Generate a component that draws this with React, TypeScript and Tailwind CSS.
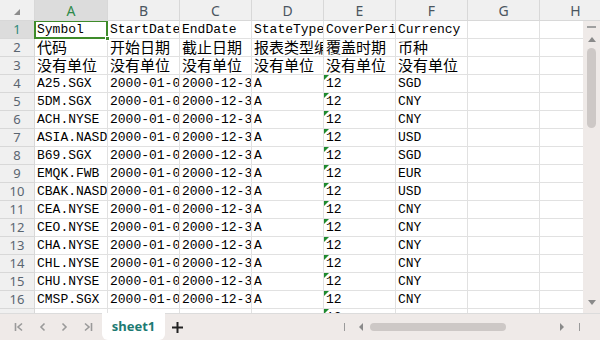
const cols = ["A", "B", "C", "D", "E", "F", "G", "H"];
const widths = ["w-[73px]", "w-[72px]", "w-[72px]", "w-[72px]", "w-[72px]", "w-[72px]", "w-[72px]", "w-[72px]"];

const latin = "font-['Liberation_Mono',monospace] text-[13px]";
const cjk = "font-['Noto_Sans_CJK_SC',sans-serif] text-[15px]";

const data: { cells: string[]; cjk?: boolean }[] = [
  { cells: ["Symbol", "StartDate", "EndDate", "StateType", "CoverPeriod", "Currency"] },
  { cells: ["代码", "开始日期", "截止日期", "报表类型编码", "覆盖时期", "币种"], cjk: true },
  { cells: ["没有单位", "没有单位", "没有单位", "没有单位", "没有单位", "没有单位"], cjk: true },
  ...[
    ["A25.SGX", "SGD"],
    ["5DM.SGX", "CNY"],
    ["ACH.NYSE", "CNY"],
    ["ASIA.NASDAQ", "USD"],
    ["B69.SGX", "SGD"],
    ["EMQK.FWB", "EUR"],
    ["CBAK.NASDAQ", "USD"],
    ["CEA.NYSE", "CNY"],
    ["CEO.NYSE", "CNY"],
    ["CHA.NYSE", "CNY"],
    ["CHL.NYSE", "CNY"],
    ["CHU.NYSE", "CNY"],
    ["CMSP.SGX", "CNY"],
  ].map(([s, c]) => ({ cells: [s, "2000-01-01", "2000-12-31", "A", "12", c] })),
  { cells: ["", "", "", "", "12", ""] },
];

function Cell({ text, i, row, isCjk }: { text: string; i: number; row: number; isCjk?: boolean }) {
  const flag = i === 4 && row >= 4;
  return (
    <div
      className={`${widths[i]} shrink-0 h-[18px] border-r border-b border-[#e1e1e1] relative overflow-hidden whitespace-nowrap px-[2px] text-black flex items-center ${isCjk ? cjk : latin}`}
    >
      {flag && (
        <svg className="absolute left-0 top-0" width="5" height="5" viewBox="0 0 5 5">
          <polygon points="0,0 5,0 0,5" fill="#1e8a2e" />
        </svg>
      )}
      {text}
    </div>
  );
}

function Tri({ dir }: { dir: "l" | "r" | "u" | "d" }) {
  const pts = { l: "4,0 4,8 0,4", r: "0,0 0,8 4,4", u: "0,5 8,5 4,0", d: "0,0 8,0 4,5" }[dir];
  const w = dir === "l" || dir === "r" ? 4 : 8;
  const h = dir === "l" || dir === "r" ? 8 : 5;
  return (
    <svg width={w} height={h} viewBox={`0 0 ${w} ${h}`}>
      <polygon points={pts} fill="#8a8a8a" />
    </svg>
  );
}

export default function App() {
  return (
    <div className="w-[600px] h-[340px] flex flex-col bg-white overflow-hidden">
      {/* column headers */}
      <div className="flex h-[21px] shrink-0 bg-[#f0f0f0] border-b border-[#d8d8d8] overflow-hidden font-['Noto_Sans',sans-serif] text-[14px] text-[#4a5560]">
        <div className="w-[35px] shrink-0 border-r border-[#d8d8d8] flex items-end justify-end pr-[14px] pb-[5px]">
          <svg width="6" height="6" viewBox="0 0 6 6">
            <polygon points="6,0 6,6 0,6" fill="#8c8c8c" />
          </svg>
        </div>
        {cols.map((c, i) => (
          <div
            key={c}
            className={`${widths[i]} shrink-0 border-r border-[#d8d8d8] flex items-center justify-center ${i === 0 ? "bg-[#dcdcdc] text-[#2e8a4a]" : ""}`}
          >
            {c}
          </div>
        ))}
      </div>

      <div className="flex flex-1 min-h-0">
        <div className="flex-1 min-w-0 overflow-hidden relative">
          {data.map((r, ri) => {
            const row = ri + 1;
            return (
              <div key={row} className="flex">
                <div
                  className={`w-[35px] shrink-0 h-[18px] border-r border-b border-[#d8d8d8] flex items-center justify-center font-['Noto_Sans',sans-serif] text-[13px] ${row === 1 ? "bg-[#dcdcdc] text-[#2e8a7a]" : "bg-[#f0f0f0] text-[#5a6570]"}`}
                >
                  {row}
                </div>
                {cols.map((c, i) => (
                  <Cell key={c} text={r.cells[i] ?? ""} i={i} row={row} isCjk={r.cjk} />
                ))}
              </div>
            );
          })}
          {/* active cell */}
          <div className="absolute left-[34px] top-[-1px] w-[74px] h-[19px] border-2 border-[#3e8b2a] pointer-events-none">
            <div className="absolute right-[-4px] bottom-[-4px] w-[5px] h-[5px] bg-[#3e8b2a] border border-white" />
          </div>
        </div>

        {/* vertical scrollbar */}
        <div className="w-[17px] shrink-0 bg-[#efeae8] flex flex-col items-center pt-[5px] pb-[8px]">
          <div className="w-[9px] h-[2px] bg-[#a0a0a0]" />
          <div className="mt-[9px]">
            <Tri dir="u" />
          </div>
          <div className="w-[9px] h-[80px] mt-[6px] rounded-full bg-[#cdc8c6]" />
          <div className="flex-1" />
          <Tri dir="d" />
        </div>
      </div>

      {/* sheet bar */}
      <div className="h-[27px] shrink-0 bg-[#efeae8] border-t border-[#dcdcdc] flex items-stretch">
        <div className="flex items-center gap-[15px] pl-[14px] w-[102px]">
          <svg width="10" height="10" viewBox="0 0 10 10" fill="none" stroke="#9a9a9a" strokeWidth="1.6">
            <path d="M1.5 1v8M8 1.5 4 5l4 3.5" />
          </svg>
          <svg width="7" height="10" viewBox="0 0 7 10" fill="none" stroke="#9a9a9a" strokeWidth="1.6">
            <path d="M5.5 1.5 2 5l3.5 3.5" />
          </svg>
          <svg width="7" height="10" viewBox="0 0 7 10" fill="none" stroke="#9a9a9a" strokeWidth="1.6">
            <path d="M1.5 1.5 5 5l-3.5 3.5" />
          </svg>
          <svg width="10" height="10" viewBox="0 0 10 10" fill="none" stroke="#9a9a9a" strokeWidth="1.6">
            <path d="M2 1.5 6 5 2 8.5M8.5 1v8" />
          </svg>
        </div>
        <div className="w-[63px] bg-white rounded-b-[6px] flex items-center justify-center font-['Noto_Sans',sans-serif] text-[13px] font-bold text-[#1d7a72] -mt-px">
          sheet1
        </div>
        <div className="w-[24px] flex items-center justify-center">
          <svg width="11" height="11" viewBox="0 0 11 11" stroke="#222" strokeWidth="2">
            <path d="M5.5 0v11M0 5.5h11" />
          </svg>
        </div>
        <div className="flex-1" />
        <div className="flex items-center w-[256px]">
          <div className="w-px h-[8px] bg-[#9a9a9a]" />
          <div className="ml-[14px]">
            <Tri dir="l" />
          </div>
          <div className="ml-[7px] w-[136px] h-[8px] rounded-full bg-[#cdc8c6]" />
          <div className="flex-1" />
          <Tri dir="r" />
          <div className="ml-[15px] mr-[20px] w-px h-[8px] bg-[#9a9a9a]" />
        </div>
      </div>
    </div>
  );
}
